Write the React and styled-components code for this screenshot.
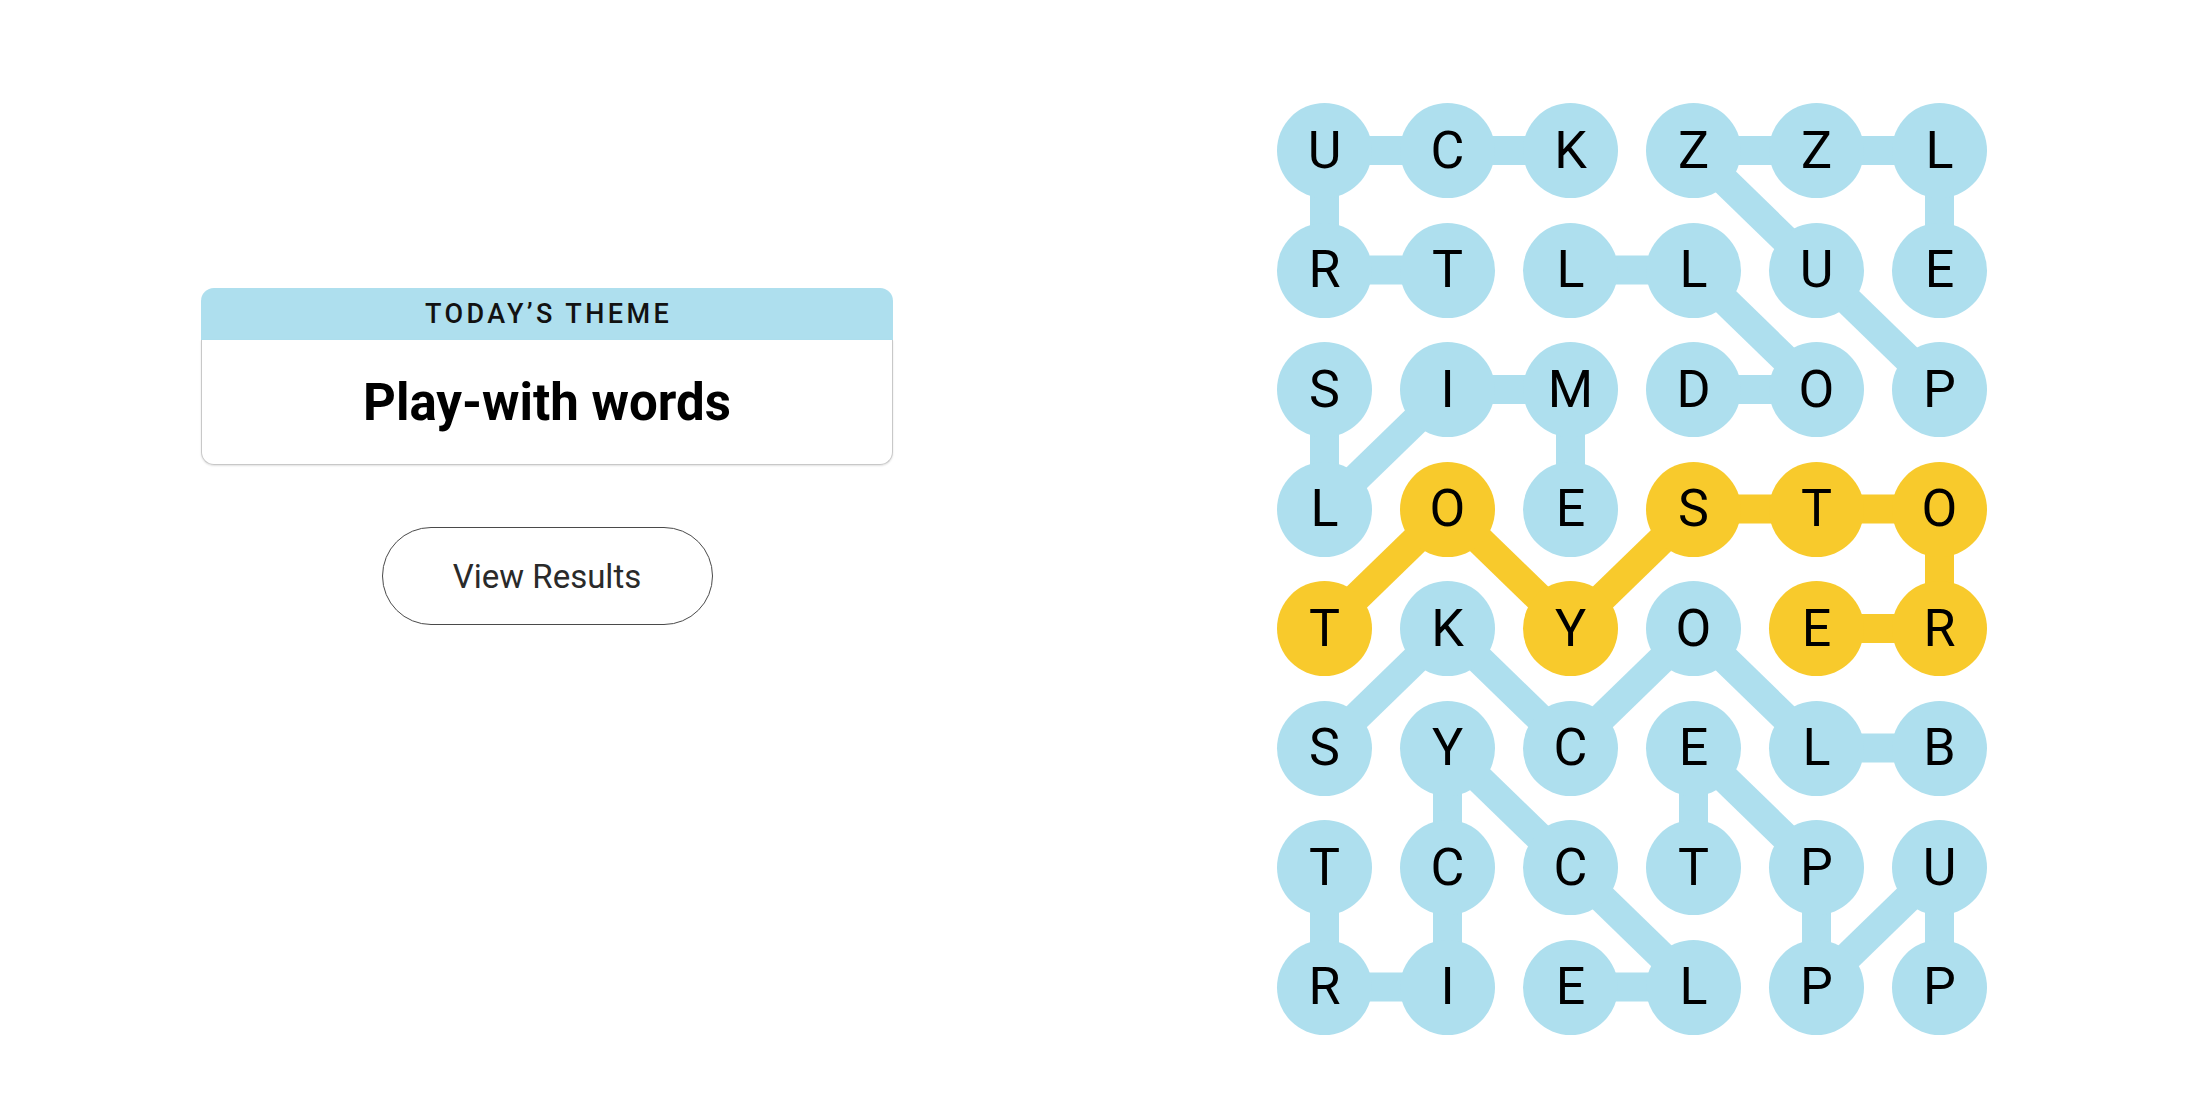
import React from "react";
import styled, { createGlobalStyle } from "styled-components";

const GlobalStyle = createGlobalStyle`
  html, body {
    margin: 0;
    padding: 0;
    background: #ffffff;
    font-family: Roboto, "Liberation Sans", Arial, sans-serif;
  }
`;

const BLUE = "#aedfee";
const YELLOW = "#f8ca2c";
const CELL = 95;
const COL_GAP = 28;
const ROW_GAP = 24.5;
const STROKE = 29;

const LETTERS = [
  "UCKZZL",
  "RTLLUE",
  "SIMDOP",
  "LOESTO",
  "TKYOER",
  "SYCELB",
  "TCCTPU",
  "RIELPP",
];

const WORDS = [
  { color: BLUE, path: [[1, 1], [1, 0], [0, 0], [0, 1], [0, 2]] },
  { color: BLUE, path: [[2, 5], [1, 4], [0, 3], [0, 4], [0, 5], [1, 5]] },
  { color: BLUE, path: [[2, 3], [2, 4], [1, 3], [1, 2]] },
  { color: BLUE, path: [[2, 0], [3, 0], [2, 1], [2, 2], [3, 2]] },
  { color: BLUE, path: [[5, 5], [5, 4], [4, 3], [5, 2], [4, 1], [5, 0]] },
  { color: BLUE, path: [[6, 0], [7, 0], [7, 1], [6, 1], [5, 1], [6, 2], [7, 3], [7, 2]] },
  { color: BLUE, path: [[7, 5], [6, 5], [7, 4], [6, 4], [5, 3], [6, 3]] },
  { color: YELLOW, path: [[4, 0], [3, 1], [4, 2], [3, 3], [3, 4], [3, 5], [4, 5], [4, 4]] },
];

const cellColor = {};
WORDS.forEach((w) => w.path.forEach(([r, c]) => (cellColor[`${r}-${c}`] = w.color)));

const cx = (c) => CELL / 2 + c * (CELL + COL_GAP);
const cy = (r) => CELL / 2 + r * (CELL + ROW_GAP);

const BOARD_W = 6 * CELL + 5 * COL_GAP;
const BOARD_H = 8 * CELL + 7 * ROW_GAP;

const Page = styled.main`
  display: flex;
  align-items: flex-start;
  gap: 384px;
  width: 2200px;
  height: 1100px;
  box-sizing: border-box;
  padding: 103px 0 0 201px;
`;

const SidePanel = styled.section`
  display: flex;
  flex-direction: column;
  align-items: center;
  width: 692px;
  margin-top: 185px;
  gap: 62px;
`;

const ThemeCard = styled.div`
  width: 100%;
  display: flex;
  flex-direction: column;
`;

const ThemeHeader = styled.div`
  height: 52px;
  background: ${BLUE};
  border-radius: 13px 13px 0 0;
  display: flex;
  align-items: center;
  justify-content: center;
  padding-left: 3px;
  font-family: Roboto, "Liberation Sans", Arial, sans-serif;
  font-weight: 500;
  font-size: 27px;
  letter-spacing: 3.4px;
  color: #121212;
  text-transform: uppercase;
`;

const ThemeBody = styled.div`
  height: 124px;
  border: 1px solid #c8c8c8;
  border-top: none;
  border-radius: 0 0 13px 13px;
  box-shadow: 0 1px 2px rgba(0, 0, 0, 0.12);
  display: flex;
  align-items: center;
  justify-content: center;
  font-family: Roboto, "Liberation Sans", Arial, sans-serif;
  font-weight: 700;
  font-size: 51px;
  color: #000;
`;

const ResultsButton = styled.button`
  width: 331px;
  height: 98px;
  border: 1.5px solid #4a4a4a;
  border-radius: 49px;
  background: #fff;
  font-family: Roboto, "Liberation Sans", Arial, sans-serif;
  font-size: 33px;
  color: #2a2a2a;
  cursor: pointer;
`;

const Board = styled.div`
  position: relative;
  width: ${BOARD_W}px;
  height: ${BOARD_H}px;
`;

const Connectors = styled.svg`
  position: absolute;
  inset: 0;
`;

const LetterGrid = styled.div`
  position: relative;
  display: grid;
  grid-template-columns: repeat(6, ${CELL}px);
  grid-auto-rows: ${CELL}px;
  column-gap: ${COL_GAP}px;
  row-gap: ${ROW_GAP}px;
`;

const LetterCircle = styled.div`
  width: ${CELL}px;
  height: ${CELL}px;
  border-radius: 50%;
  background: ${(p) => p.$color};
  display: flex;
  align-items: center;
  justify-content: center;
  font-family: Roboto, "Liberation Sans", Arial, sans-serif;
  font-size: 52px;
  color: #000;
  line-height: 1;
`;

export default function App() {
  const edges = [];
  WORDS.forEach((w, wi) => {
    for (let i = 0; i < w.path.length - 1; i++) {
      const [r1, c1] = w.path[i];
      const [r2, c2] = w.path[i + 1];
      edges.push(
        <line
          key={`${wi}-${i}`}
          x1={cx(c1)}
          y1={cy(r1)}
          x2={cx(c2)}
          y2={cy(r2)}
          stroke={w.color}
          strokeWidth={STROKE}
        />
      );
    }
  });

  return (
    <>
      <GlobalStyle />
      <Page>
        <SidePanel>
          <ThemeCard>
            <ThemeHeader>Today’s Theme</ThemeHeader>
            <ThemeBody>Play-with words</ThemeBody>
          </ThemeCard>
          <ResultsButton>View Results</ResultsButton>
        </SidePanel>
        <Board>
          <Connectors width={BOARD_W} height={BOARD_H} viewBox={`0 0 ${BOARD_W} ${BOARD_H}`}>
            {edges}
          </Connectors>
          <LetterGrid>
            {LETTERS.map((row, r) =>
              row.split("").map((ch, c) => (
                <LetterCircle key={`${r}-${c}`} $color={cellColor[`${r}-${c}`] || BLUE}>
                  {ch}
                </LetterCircle>
              ))
            )}
          </LetterGrid>
        </Board>
      </Page>
    </>
  );
}
